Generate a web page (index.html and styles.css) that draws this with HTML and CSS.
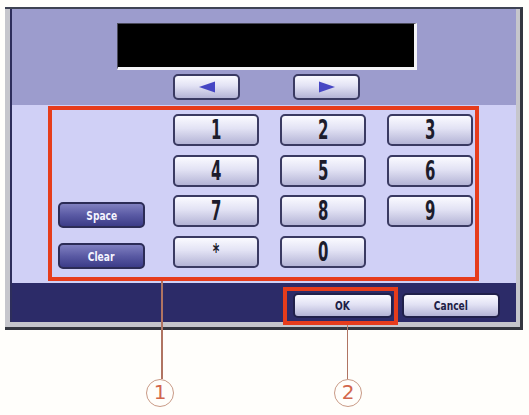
FILE: index.html
```html
<!DOCTYPE html>
<html>
<head>
    <meta charset="UTF-8">
    <title>Keypad</title>
    <link rel="stylesheet" href="styles.css">
</head>
<body>
    <div class="page">
        <div class="bezel">
            <div class="screen">
                <div class="top">
                    <div class="display"></div>
                    <div class="arrows">
                        <button class="key arrow">
                            <svg width="18" height="12" viewBox="0 0 18 12"><polygon points="1,6 17,0.5 17,11.5" fill="#4646c4"/></svg>
                        </button>
                        <button class="key arrow">
                            <svg width="18" height="12" viewBox="0 0 18 12"><polygon points="17,6 1,0.5 1,11.5" fill="#4646c4"/></svg>
                        </button>
                    </div>
                </div>

                <div class="middle">
                    <div class="side">
                        <button class="dark"><span>Space</span></button>
                        <button class="dark"><span>Clear</span></button>
                    </div>
                    <div class="keys">
                        <button class="key num"><span>1</span></button>
                        <button class="key num"><span>2</span></button>
                        <button class="key num"><span>3</span></button>
                        <button class="key num"><span>4</span></button>
                        <button class="key num"><span>5</span></button>
                        <button class="key num"><span>6</span></button>
                        <button class="key num"><span>7</span></button>
                        <button class="key num"><span>8</span></button>
                        <button class="key num"><span>9</span></button>
                        <button class="key num star"><span>*</span></button>
                        <button class="key num"><span>0</span></button>
                    </div>
                    <div class="mark mark-keys"></div>
                </div>

                <div class="bar">
                    <button class="key wide ok"><span>OK</span></button>
                    <button class="key wide cancel"><span>Cancel</span></button>
                    <div class="mark mark-ok"></div>
                </div>
            </div>
        </div>

        <!-- callouts -->
        <div class="leader leader-1"></div>
        <div class="leader leader-2"></div>
        <div class="callout callout-1">1</div>
        <div class="callout callout-2">2</div>
    </div>
</body>
</html>
```

FILE: styles.css
```css
body {
    margin: 0;
    background: #fffefb;
    font-family: 'DejaVu Sans Condensed', 'DejaVu Sans', sans-serif;
}
.page {
    position: relative;
    width: 529px;
    height: 415px;
    padding-top: 7px;
    box-sizing: border-box;
}
.bezel {
    margin-left: 5px;
    width: 518px;
    box-sizing: border-box;
    background: #c6c6cc;
    border-top: 2px solid #3e4252;
    border-right: 3px solid #34363f;
    border-bottom: 3px solid #34363f;
    padding: 0 4px 5px 5px;
}
.screen {
    border-left: 2px solid #2e2e5c;
    width: 504px;
}
.top {
    background: #9c9ccd;
    height: 96px;
    padding-top: 14px;
    box-sizing: border-box;
}
.display {
    margin-left: 105px;
    width: 300px;
    height: 47px;
    box-sizing: border-box;
    background: #000;
    border-top: 1px solid #4a4a5a;
    border-left: 1px solid #4a4a5a;
    border-right: 3px solid #f4f4f8;
    border-bottom: 3px solid #f4f4f8;
}
.arrows {
    display: flex;
    gap: 53px;
    padding: 4px 0 0 161px;
}
button {
    font-family: inherit;
    padding: 0;
    margin: 0;
    cursor: pointer;
}
.key {
    box-sizing: border-box;
    border: 2px solid #3a3a62;
    border-radius: 5px;
    background: linear-gradient(#fafaff, #e2e2f4 45%, #b4b4d6);
    color: #1c1c2c;
    display: flex;
    align-items: center;
    justify-content: center;
}
.arrow {
    width: 67px;
    height: 26px;
}
.middle {
    position: relative;
    display: flex;
    background: #d0d0f6;
    height: 178px;
    box-sizing: border-box;
    padding: 9px 0 0 46px;
}
.side {
    width: 87px;
    margin-right: 28px;
    padding-top: 88px;
    display: flex;
    flex-direction: column;
    gap: 15px;
}
.dark {
    height: 26px;
    box-sizing: border-box;
    border: 2px solid #2c2c56;
    border-radius: 5px;
    background: linear-gradient(#8080c0, #5a5aa4 50%, #3c3c88);
    color: #f4f4ff;
    font-size: 13px;
    font-weight: bold;
}
.dark span, .wide span {
    display: inline-block;
    transform: scaleX(0.78);
}
.keys {
    display: grid;
    grid-template-columns: repeat(3, 86px);
    grid-auto-rows: 32px;
    column-gap: 21px;
    row-gap: 8.5px;
}
.num {
    font-size: 26px;
    font-weight: bold;
    line-height: 1;
}
.num span {
    display: inline-block;
    transform: scaleX(0.64);
}
.star {
    font-size: 22px;
}
.bar {
    position: relative;
    display: flex;
    justify-content: flex-end;
    gap: 9px;
    background: #2c2b68;
    height: 39px;
    box-sizing: border-box;
    padding: 10px 16px 0 0;
}
.wide {
    height: 25px;
    font-size: 13px;
    font-weight: bold;
    color: #1e1e46;
    border-color: #20204a;
}
.ok { width: 100px; }
.cancel { width: 98px; }
.mark {
    position: absolute;
    box-sizing: border-box;
    border: 4px solid #e63c1c;
}
.mark-keys {
    left: 36px;
    top: 1px;
    width: 431px;
    height: 175px;
}
.mark-ok {
    left: 271px;
    top: 4px;
    width: 115px;
    height: 38px;
}
.leader {
    position: absolute;
    width: 1.5px;
    background: #b07462;
}
.leader-1 {
    left: 161px;
    top: 281px;
    height: 98px;
}
.leader-2 {
    left: 346.5px;
    top: 325px;
    height: 54px;
}
.callout {
    position: absolute;
    top: 379px;
    width: 28px;
    height: 28px;
    box-sizing: border-box;
    border: 1.5px solid #c99a86;
    border-radius: 50%;
    color: #d2664c;
    font-family: 'DejaVu Sans', sans-serif;
    font-size: 20px;
    line-height: 25px;
    text-align: center;
}
.callout-1 { left: 146px; }
.callout-2 { left: 334px; }
```
